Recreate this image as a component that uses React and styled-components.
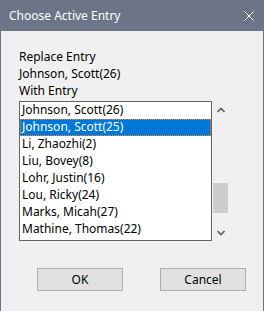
import React from "react";
import styled, { createGlobalStyle } from "styled-components";

const GlobalStyle = createGlobalStyle`
  html, body {
    margin: 0;
    padding: 0;
    background: #f0f0f0;
  }
`;

const Window = styled.div`
  box-sizing: border-box;
  width: 264px;
  height: 311px;
  background: #f0f0f0;
  border-left: 1px solid #6c7588;
  border-right: 1px solid #6c7588;
  font-family: "Noto Sans", "Open Sans", sans-serif;
  font-size: 12px;
  color: #000;
  display: flex;
  flex-direction: column;
  overflow: hidden;
`;

const TitleBar = styled.div`
  height: 31px;
  flex-shrink: 0;
  background: #6c7588;
  display: flex;
  align-items: center;
  justify-content: space-between;
  padding: 0 9px 0 8px;
  color: #fff;
  font-size: 12px;
`;

const Title = styled.span`
  line-height: 31px;
  margin-top: -1px;
`;

const Body = styled.div`
  padding: 17px 0 0 18px;
  display: flex;
  flex-direction: column;
`;

const Label = styled.div`
  line-height: 17px;
  height: 17px;
`;

const ListRow = styled.div`
  display: flex;
  margin-top: 2px;
`;

const ListBox = styled.div`
  box-sizing: border-box;
  width: 193px;
  height: 140px;
  background: #fff;
  border: 1px solid #646464;
  overflow: hidden;
`;

const Item = styled.div`
  box-sizing: border-box;
  height: 17px;
  line-height: 14px;
  padding-left: 1px;
  white-space: nowrap;
  background: ${(p) => (p.$selected ? "#0078d7" : "transparent")};
  color: ${(p) => (p.$selected ? "#fff" : "#000")};
  border: 1px dotted ${(p) => (p.$selected ? "#f08a24" : "transparent")};
`;

const ScrollBar = styled.div`
  width: 17px;
  height: 140px;
  display: flex;
  flex-direction: column;
`;

const ArrowButton = styled.div`
  height: 17px;
  display: flex;
  align-items: center;
  justify-content: center;
`;

const Track = styled.div`
  flex: 1;
  display: flex;
  flex-direction: column;
  padding: 0 1px;
`;

const Thumb = styled.div`
  margin-top: ${(p) => p.$offset}px;
  height: 30px;
  background: #cdcdcd;
`;

const Buttons = styled.div`
  display: flex;
  gap: 37px;
  padding-left: 18px;
  margin-top: 27px;
`;

const Button = styled.div`
  box-sizing: border-box;
  width: 86px;
  height: 23px;
  background: #e1e1e1;
  border: 1px solid #adadad;
  display: flex;
  align-items: center;
  justify-content: center;
  line-height: 14px;
`;

const entries = [
  "Johnson, Scott(26)",
  "Johnson, Scott(25)",
  "Li, Zhaozhi(2)",
  "Liu, Bovey(8)",
  "Lohr, Justin(16)",
  "Lou, Ricky(24)",
  "Marks, Micah(27)",
  "Mathine, Thomas(22)",
];

const Chevron = ({ down }) => (
  <svg width="8" height="6" viewBox="0 0 8 6">
    <path
      d={down ? "M0.5 1 L4 4.5 L7.5 1" : "M0.5 5 L4 1.5 L7.5 5"}
      fill="none"
      stroke="#606060"
      strokeWidth="1.6"
    />
  </svg>
);

const App = () => {
  return (
    <>
      <GlobalStyle />
      <Window>
        <TitleBar>
          <Title>Choose Active Entry</Title>
          <svg width="10" height="10" viewBox="0 0 10 10">
            <path d="M0.5 0.5 L9.5 9.5 M9.5 0.5 L0.5 9.5" stroke="#fff" strokeWidth="1" />
          </svg>
        </TitleBar>
        <Body>
          <Label>Replace Entry</Label>
          <Label>Johnson, Scott(26)</Label>
          <Label>With Entry</Label>
          <ListRow>
            <ListBox>
              {entries.map((e, i) => (
                <Item key={i} $selected={i === 1}>
                  {e}
                </Item>
              ))}
            </ListBox>
            <ScrollBar>
              <ArrowButton>
                <Chevron />
              </ArrowButton>
              <Track>
                <Thumb $offset={65} />
              </Track>
              <ArrowButton>
                <Chevron down />
              </ArrowButton>
            </ScrollBar>
          </ListRow>
          <Buttons>
            <Button>OK</Button>
            <Button>Cancel</Button>
          </Buttons>
        </Body>
      </Window>
    </>
  );
};

export default App;
